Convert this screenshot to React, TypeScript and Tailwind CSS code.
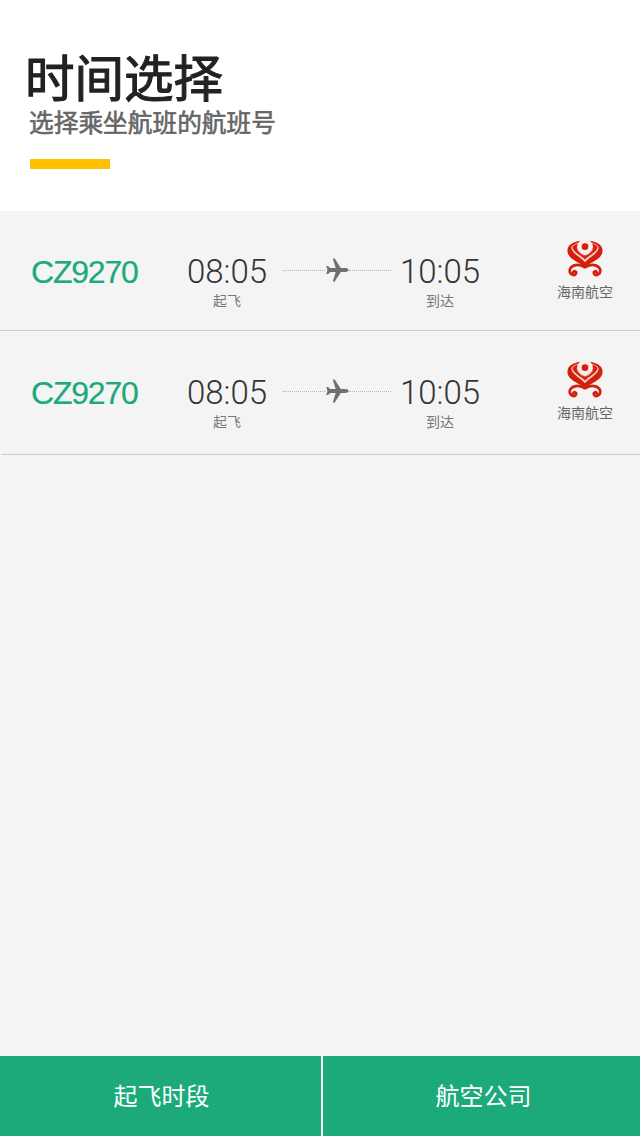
import React from 'react';

const CJK = "font-['Liberation_Sans','Noto_Sans_CJK_SC',sans-serif]";

function PlaneIcon() {
  return (
    <svg viewBox="0 0 24 24" className="w-[24px] h-[26px] shrink-0 -mt-[1px]" fill="#6f6f6f">
      <path d="M23.6 12c0-.9-1.300-1.900-3.200-1.900h-4.600L9.700.4H7.800l2.900 9.700H5.200L3 7.900H1.300l1.200 4.100-1.200 4.100H3l2.200-2.200h5.500L7.800 23.600h1.900l6.100-9.700h4.600c1.900 0 3.200-1 3.200-1.900z" />
    </svg>
  );
}

function HainanLogo() {
  return (
    <svg viewBox="0 0 40 40" className="w-[38px] h-[38px]" fill="none">
      <path d="M20 29 C15 23 1.500 21 1.500 11 C1.500 4 10 .5 20 .5 C30 .5 38.500 4 38.500 11 C38.500 21 25 23 20 29 Z" fill="#d3200c" />
      <path d="M5.500 8 C6 14 15 18 20 23.500 C25 18 34 14 34.500 8 C33 4 27 2 20 2 C13 2 7 4 5.500 8 Z" fill="#f6cfc7" />
      <path d="M6.800 7.500 C8 13 16 16 20 20.500 C24 16 32 13 33.200 7.500 C31 4 26 3 20 3 C14 3 9 4 6.800 7.500 Z" fill="#d3200c" />
      <circle cx="20" cy="7.500" r="8.500" fill="#fbeeea" />
      <path d="M11.500 8 C12 13 17 15 20 17 C23 15 28 13 28.500 8" stroke="#e4604c" strokeWidth="1" />
      <circle cx="20" cy="7" r="3.500" fill="#d3200c" />
      <path d="M19.500 28.500 C14 25 6 25.500 4 31 C3 36 8.500 38.500 10.500 35.500 C11.500 33 8.500 32 7.500 34" stroke="#d3200c" strokeWidth="2.800" strokeLinecap="round" />
      <path d="M20.500 28.500 C26 25 34 25.500 36 31 C37 36 31.500 38.500 29.500 35.500 C28.500 33 31.500 32 32.500 34" stroke="#d3200c" strokeWidth="2.800" strokeLinecap="round" />
    </svg>
  );
}

function TimeBlock({ time, label }: { time: string; label: string }) {
  return (
    <div className="flex flex-col items-center w-[90px] shrink-0">
      <div className="text-[33px] leading-[38px] mt-[1px] font-light text-[#333333] font-['Roboto',sans-serif] whitespace-nowrap">{time}</div>
      <div className="text-[14px] leading-[20px] text-[#777777]">{label}</div>
    </div>
  );
}

function FlightRow({ rowClass }: { rowClass: string }) {
  return (
    <div className={`flex items-start ${rowClass}`}>
      <div className="w-[182px] pl-[31px] pt-[1px] text-[32px] leading-[38px] tracking-[-1.2px] text-[#1aaa7b] [-webkit-text-stroke:0.2px_#1aaa7b] shrink-0">CZ9270</div>
      <TimeBlock time="08:05" label="起飞" />
      <div className="flex items-center w-[108px] ml-[11px] mr-[4px] h-[36px] shrink-0">
        <div className="flex-1 border-t border-dotted border-[#b5b5b5]" />
        <PlaneIcon />
        <div className="flex-1 border-t border-dotted border-[#b5b5b5]" />
      </div>
      <TimeBlock time="10:05" label="到达" />
      <div className="flex flex-col items-center w-[60px] ml-[70px] -mt-[12px] shrink-0">
        <HainanLogo />
        <div className="text-[14px] leading-[20px] mt-[4px] text-[#666666] whitespace-nowrap">海南航空</div>
      </div>
    </div>
  );
}

export default function App() {
  return (
    <div className={`flex flex-col w-[640px] h-[1136px] bg-[#f4f4f4] ${CJK}`}>
      {/* Header */}
      <div className="h-[211px] bg-white pt-[51px] pl-[25px] shrink-0">
        <h1 className="text-[49.5px] leading-[58px] text-[#222222] [-webkit-text-stroke:1.1px_#222222]">时间选择</h1>
        <p className="text-[24.7px] leading-[30px] ml-[4px] text-[#666666] [-webkit-text-stroke:0.6px_#666666]">选择乘坐航班的航班号</p>
        <div className="w-[80px] h-[10px] mt-[20px] ml-[5px] bg-[#ffc000]" />
      </div>

      {/* Flights */}
      <div className="flex-1">
        <FlightRow rowClass="h-[119px] pt-[41px]" />
        <div className="h-px bg-[#cccccc]" />
        <FlightRow rowClass="h-[123px] pt-[42px]" />
        <div className="h-px ml-[1px] bg-[#cccccc]" />
      </div>

      {/* Bottom bar */}
      <div className="flex h-[80px] shrink-0 bg-[#1caa7b] text-white text-[24px] leading-[82px]">
        <div className="w-[321px] pl-[2px] text-center">起飞时段</div>
        <div className="w-[2px] bg-[#f4f4f4]" />
        <div className="flex-1 pl-[4px] text-center">航空公司</div>
      </div>
    </div>
  );
}
